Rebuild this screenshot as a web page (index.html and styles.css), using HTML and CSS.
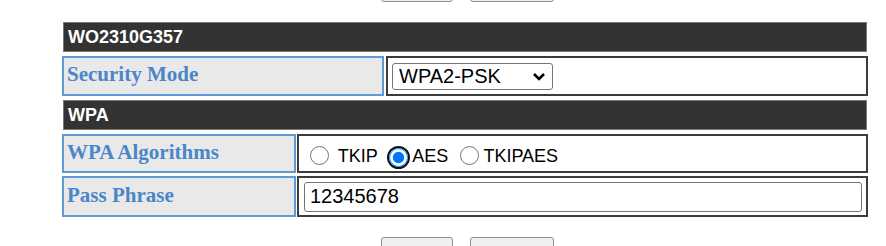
FILE: index.html
```html
<!DOCTYPE html>
<html>
  <head>
    <meta charset="UTF-8">
    <title>Wireless Security</title>
    <link rel="stylesheet" href="styles.css">
  </head>
  <body>

    <div class='buttons buttons-top'>
      <button class='btn btn-apply' title='Apply'></button>
      <button class='btn btn-cancel' title='Cancel'></button>
    </div>

    <div class='panel'>
      <div class='bar'>WO2310G357</div>
      <div class='row row-mode'>
        <div class='label'>Security Mode</div>
        <div class='value'>
          <select class='mode-select'>
            <option>WPA2-PSK</option>
          </select>
        </div>
      </div>

      <div class='bar bar-wpa'>WPA</div>
      <div class='row row-wpa'>
        <div class='label'>WPA Algorithms</div>
        <div class='value'>
          <span class='radios'><input type='radio' name='cipher'> TKIP <span class='ring'><input type='radio' name='cipher' checked></span>AES <input type='radio' name='cipher'>TKIPAES</span>
        </div>
      </div>
      <div class='row row-wpa row-pass'>
        <div class='label'>Pass Phrase</div>
        <div class='value'>
          <input type='text' class='pass' value='12345678'>
        </div>
      </div>
    </div>

    <div class='buttons buttons-bottom'>
      <button class='btn btn-apply' title='Apply'></button>
      <button class='btn btn-cancel' title='Cancel'></button>
    </div>

  </body>
</html>
```

FILE: styles.css
```css
html, body {
  margin: 0;
  padding: 0;
  background: white;
  overflow: hidden;
}

body {
  font-family: "Liberation Sans", Arial, sans-serif;
  font-size: 18px;
  color: black;
}

.buttons {
  display: flex;
  gap: 17px;
  margin-left: 381px;
  height: 32px;
}

.buttons-top {
  margin-top: -30px;
}

.buttons-bottom {
  margin-top: 20px;
}

.btn {
  height: 32px;
  padding: 0;
  background: #efefef;
  border: 1px solid #8f8f8f;
  border-radius: 3px;
}

.btn-apply {
  width: 72px;
}

.btn-cancel {
  width: 84px;
}

.panel {
  margin: 20px 0 0 62px;
  width: 806px;
  display: flex;
  flex-direction: column;
}

.bar {
  margin: 0 1px;
  height: 30px;
  box-sizing: border-box;
  background: #333333;
  border: 1px solid #7a7a7a;
  color: white;
  font-weight: bold;
  font-size: 18px;
  line-height: 28px;
  padding-left: 4px;
}

.bar-wpa {
  margin-top: 4px;
}

.row {
  display: grid;
  margin-top: 4px;
}

.row-mode {
  grid-template-columns: 322px 482px;
  column-gap: 2px;
  height: 40px;
}

.row-wpa {
  grid-template-columns: 234px 571px;
  column-gap: 1px;
  height: 39px;
}

.row-pass {
  margin-top: 3px;
  height: 41px;
}

.label {
  box-sizing: border-box;
  background: #e9e9e9;
  border: 2px solid #5f9ad6;
  color: #4a86c8;
  font-family: "Liberation Serif", "Times New Roman", serif;
  font-weight: bold;
  font-size: 21px;
  padding: 0 0 3px 3px;
  display: flex;
  align-items: center;
}

.value {
  box-sizing: border-box;
  background: white;
  border: 2px solid #3c3c3c;
  display: flex;
  align-items: center;
  padding: 0 4px 0 4px;
}

.mode-select {
  -webkit-appearance: none;
  appearance: none;
  width: 161px;
  height: 27px;
  font-family: "Liberation Sans", Arial, sans-serif;
  font-size: 20px;
  border: 1px solid #767676;
  border-radius: 3px;
  background: white url("data:image/svg+xml;utf8,<svg xmlns='http://www.w3.org/2000/svg' width='14' height='9' viewBox='0 0 14 9'><path d='M2 2 L7 7 L12 2' fill='none' stroke='black' stroke-width='2.6'/></svg>") no-repeat right 6px center;
  color: black;
  padding: 0 24px 0 6px;
}

.radios {
  font-size: 18px;
  white-space: nowrap;
  padding-top: 7px;
}

.radios input {
  width: 19px;
  height: 19px;
  margin: 0 4px 0 7px;
  vertical-align: -3px;
  accent-color: #0075ff;
}

.ring {
  display: inline-block;
  margin: 0 2px 0 5px;
  border: 2px solid #101010;
  border-radius: 50%;
  line-height: 0;
  vertical-align: -5px;
}

.ring input {
  margin: 0;
  vertical-align: 0;
}

.pass {
  flex: 1;
  height: 30px;
  box-sizing: border-box;
  margin-left: 1px;
  border: 1px solid #767676;
  border-radius: 3px;
  font-family: "Liberation Sans", Arial, sans-serif;
  font-size: 20px;
  padding: 0 5px;
  color: black;
}
```
